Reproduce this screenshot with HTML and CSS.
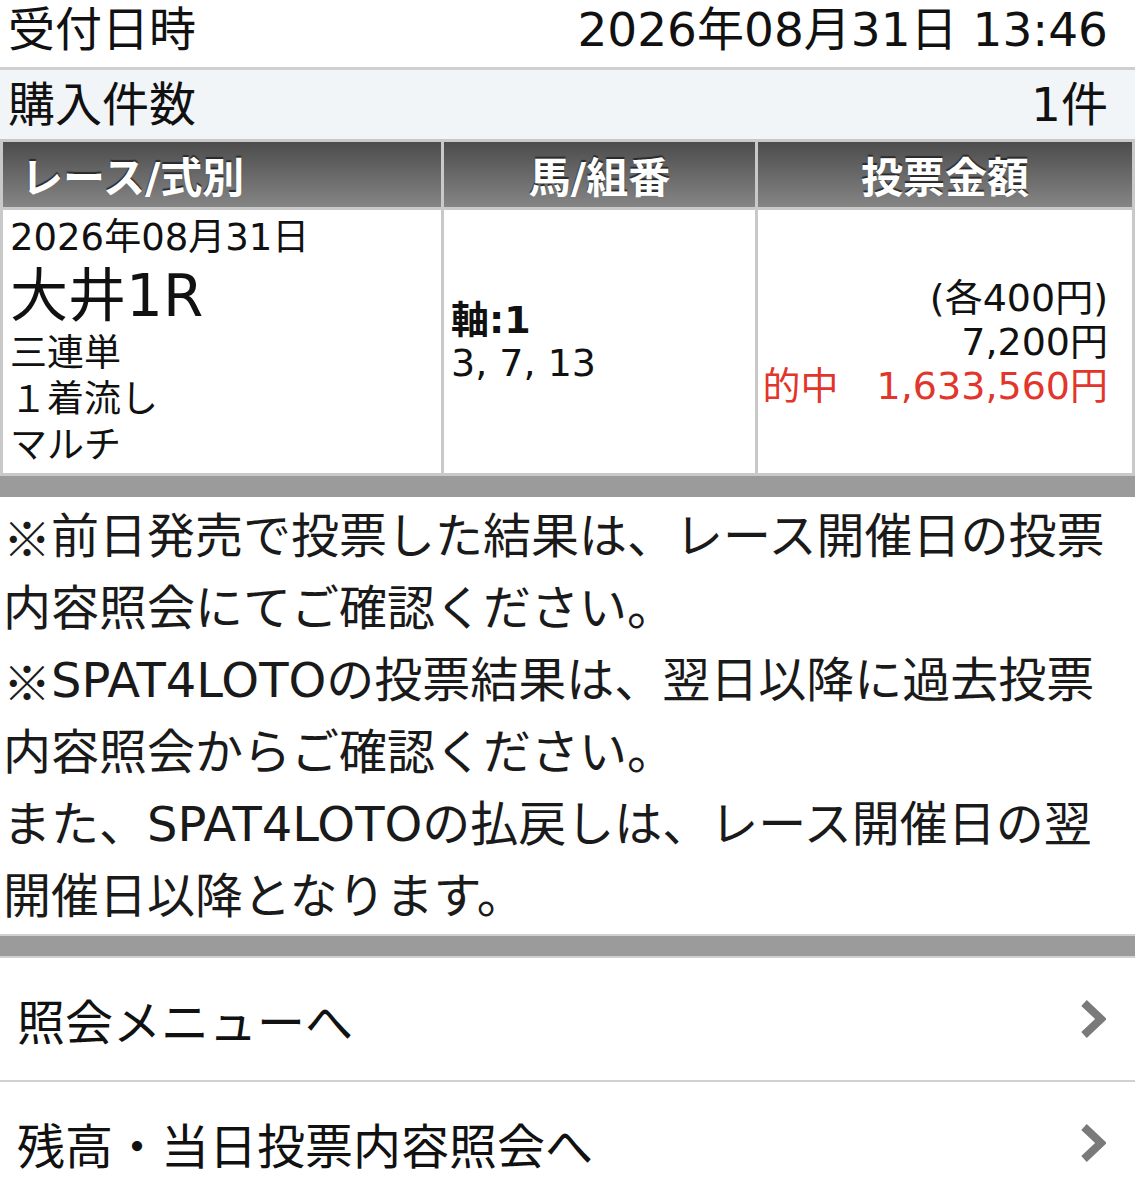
FILE: index.html
```html
<!DOCTYPE html>
<html lang="ja">
<head>
<meta charset="utf-8">
<title>投票内容</title>
<link rel="stylesheet" href="styles.css">
</head>
<body>
<div class="page">
  <div class="info-row">
    <span class="label">受付日時</span>
    <span class="value">2026年08月31日 13:46</span>
  </div>
  <div class="info-row shaded">
    <span class="label">購入件数</span>
    <span class="value">1件</span>
  </div>
  <div class="bet-table">
    <div class="th th-left">レース/式別</div>
    <div class="th">馬/組番</div>
    <div class="th">投票金額</div>
    <div class="td race">
      <div class="sm">2026年08月31日</div>
      <div class="big">大井1R</div>
      <div class="sm">三連単</div>
      <div class="sm">１着流し</div>
      <div class="sm">マルチ</div>
    </div>
    <div class="td horses">
      <div class="axis">軸:1</div>
      <div>3, 7, 13</div>
    </div>
    <div class="td amount">
      <div>(各400円)</div>
      <div>7,200円</div>
      <div class="hit">的中　1,633,560円</div>
    </div>
  </div>
  <div class="band"></div>
  <div class="notes">
    <p><span class="mark">※</span>前日発売で投票した結果は、レース開催日の投票内容照会にてご確認ください。</p>
    <p><span class="mark">※</span>SPAT4LOTOの投票結果は、翌日以降に過去投票内容照会からご確認ください。</p>
    <p>また、SPAT4LOTOの払戻しは、レース開催日の翌開催日以降となります。</p>
  </div>
  <div class="band band-lined"></div>
  <a class="menu-item" href="#">
    <span>照会メニューへ</span>
    <svg class="chev" viewBox="0 0 26 40" width="26" height="40"><polyline points="4,4 21,20 4,36" fill="none" stroke="#7a7a7a" stroke-width="8" stroke-linejoin="miter"/></svg>
  </a>
  <a class="menu-item" href="#">
    <span>残高・当日投票内容照会へ</span>
    <svg class="chev" viewBox="0 0 26 40" width="26" height="40"><polyline points="4,4 21,20 4,36" fill="none" stroke="#7a7a7a" stroke-width="8" stroke-linejoin="miter"/></svg>
  </a>
</div>
</body>
</html>
```

FILE: styles.css
```css
html, body {
  margin: 0;
  padding: 0;
  background: #ffffff;
}
body {
  font-family: "DejaVu Sans", "Noto Sans CJK JP", sans-serif;
  color: #111;
}
.page {
  width: 1135px;
  overflow: hidden;
}
.info-row {
  display: flex;
  justify-content: space-between;
  align-items: center;
  height: 59px;
  padding: 0 27px 8px 8px;
  font-size: 47px;
  line-height: 1;
  border-bottom: 3px solid #cfcfcf;
}
.info-row.shaded {
  background: #f2f5f7;
  height: 69px;
  padding-bottom: 0;
  border-bottom: none;
}
.bet-table {
  display: grid;
  grid-template-columns: 438px 311px 374px;
  grid-template-rows: 65px 263px;
  gap: 3px;
  padding: 3px;
  background: #c9c9c9;
}
.th {
  background: linear-gradient(#4c4c4c, #858585);
  color: #fff;
  font-weight: bold;
  font-size: 42px;
  display: flex;
  align-items: center;
  justify-content: center;
  text-shadow: 0 -2px 1px #2a2a2a;
}
.th-left {
  justify-content: flex-start;
  padding-left: 18px;
}
.td {
  background: #fff;
}
.race {
  padding: 5px 0 0 7px;
  font-size: 37px;
}
.race .sm {
  line-height: 46px;
}
.race .big {
  font-size: 58px;
  line-height: 70px;
}
.horses {
  display: flex;
  flex-direction: column;
  justify-content: center;
  padding-left: 7px;
  font-size: 38px;
  line-height: 43px;
}
.axis {
  font-weight: bold;
}
.amount {
  display: flex;
  flex-direction: column;
  justify-content: center;
  align-items: flex-end;
  padding-right: 24px;
  font-size: 38px;
  line-height: 44px;
}
.hit {
  color: #e2352b;
}
.band {
  height: 21px;
  background: #9b9b9b;
}
.band-lined {
  height: 20px;
  border-top: 2px solid #d0d0d0;
  border-bottom: 2px solid #d0d0d0;
}
.notes {
  padding: 3px 0 2px 3px;
  font-size: 48px;
  line-height: 72px;
  color: #1a1a1a;
}
.notes p {
  margin: 0;
}
.mark {
  display: inline-block;
  width: 48px;
  height: 72px;
  vertical-align: top;
  font-family: "Noto Sans CJK JP", sans-serif;
  line-height: 72px;
}
.menu-item {
  display: flex;
  justify-content: space-between;
  align-items: center;
  height: 122px;
  padding: 0 29px 0 17px;
  font-size: 48px;
  color: #111;
  text-decoration: none;
  border-bottom: 2px solid #d0d0d0;
}
.chev {
  display: block;
}
```
